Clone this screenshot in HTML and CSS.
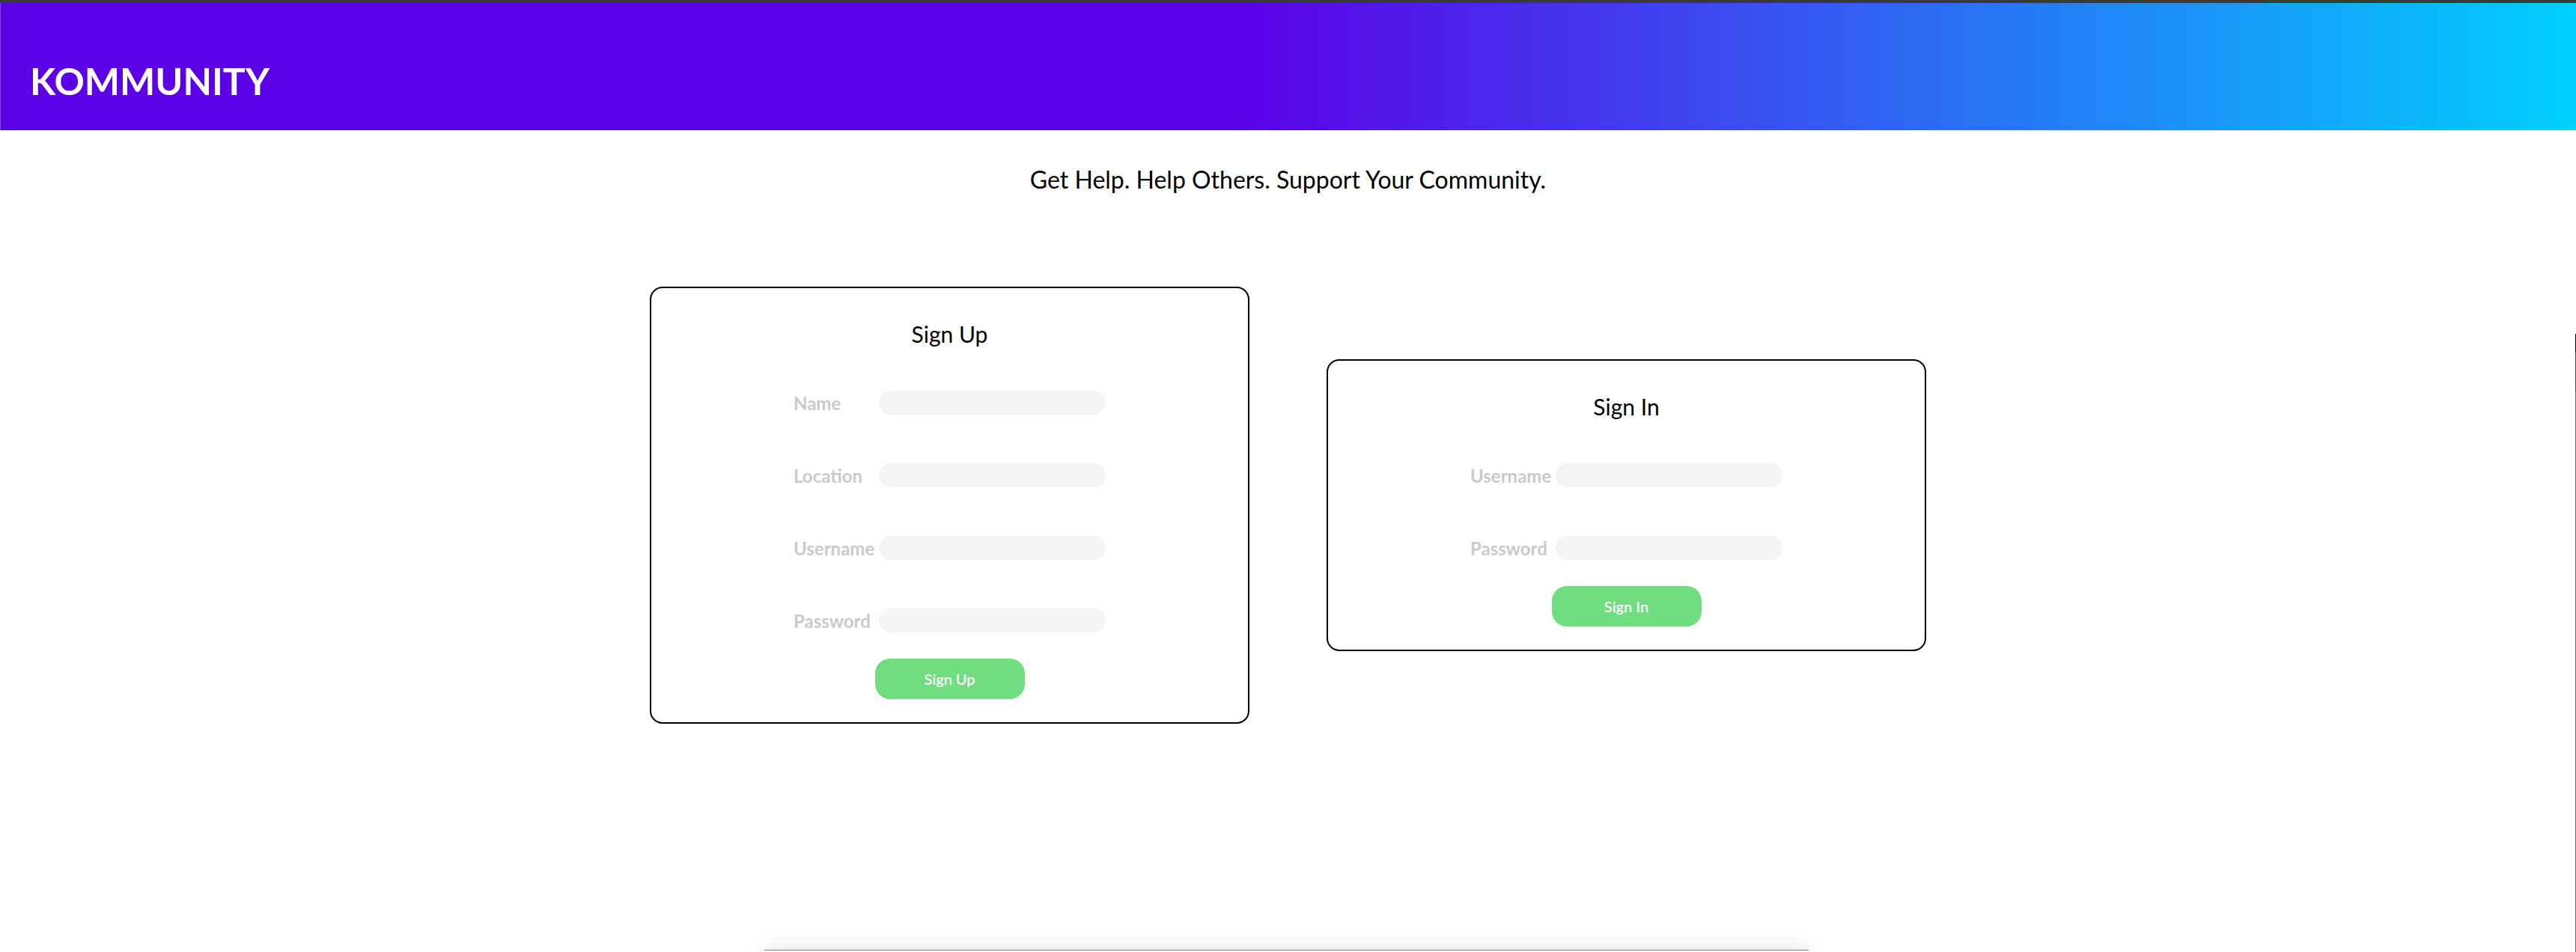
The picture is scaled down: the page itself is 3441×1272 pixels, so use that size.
FILE: index.html
```html
<!DOCTYPE html>
<html lang="en">
<head>
<meta charset="utf-8">
<title>Kommunity</title>
<link rel="stylesheet" href="styles.css">
</head>
<body>
<div class="topstrip"></div>
<header class="header">
  <h1 class="brand">KOMMUNITY</h1>
</header>
<p class="tagline">Get Help. Help Others. Support Your Community.</p>
<main class="cards">
  <section class="card">
    <h2 class="card-title">Sign Up</h2>
    <div class="fields">
      <div class="field"><label class="field-label">Name</label><input class="field-input" type="text"></div>
      <div class="field"><label class="field-label">Location</label><input class="field-input" type="text"></div>
      <div class="field"><label class="field-label">Username</label><input class="field-input" type="text"></div>
      <div class="field"><label class="field-label">Password</label><input class="field-input" type="password"></div>
    </div>
    <button class="btn">Sign Up</button>
  </section>
  <section class="card">
    <h2 class="card-title">Sign In</h2>
    <div class="fields">
      <div class="field"><label class="field-label">Username</label><input class="field-input" type="text"></div>
      <div class="field"><label class="field-label">Password</label><input class="field-input" type="password"></div>
    </div>
    <button class="btn">Sign In</button>
  </section>
</main>
<div class="bottom-peek"></div>
<div class="edge-line"></div>
</body>
</html>
```
FILE: styles.css
```css
html, body {
  margin: 0;
  padding: 0;
  background: #ffffff;
}
body {
  font-family: "Lato", "Open Sans", "Liberation Sans", sans-serif;
  color: #000;
  overflow: hidden;
  height: 1272px;
}
.topstrip {
  height: 4px;
  background: #3a3a3a;
}
.header {
  box-sizing: border-box;
  height: 170px;
  padding: 74px 0 0 39px;
  background: linear-gradient(90deg, #5c00e6 0%, #5c00e6 48%, #00cfff 100%);
  border-left: 1px solid #7d55d8;
}
.brand {
  margin: 0;
  font-size: 50px;
  font-weight: 700;
  line-height: normal;
  color: #fff;
}
.tagline {
  margin: 46px 0 0;
  text-align: center;
  font-size: 32px;
  line-height: normal;
}
.cards {
  display: flex;
  justify-content: center;
  align-items: center;
  gap: 103px;
  margin-top: 124px;
}
.card {
  box-sizing: border-box;
  width: 801px;
  border: 2px solid #000;
  border-radius: 17px;
  padding: 43px 0 31px;
  display: flex;
  flex-direction: column;
  align-items: center;
}
.card-title {
  margin: 0 0 58px;
  font-size: 30px;
  font-weight: 400;
  line-height: normal;
}
.fields {
  display: flex;
  flex-direction: column;
  gap: 65px;
}
.field {
  display: flex;
  align-items: center;
  height: 32px;
}
.field-label {
  width: 114px;
  white-space: nowrap;
  font-size: 24px;
  font-weight: 700;
  color: #cdc9c9;
}
.field-input {
  box-sizing: border-box;
  width: 303px;
  height: 32px;
  border: none;
  border-radius: 16px;
  background: #f4f4f4;
  outline: none;
  padding: 0 14px;
  font-family: inherit;
}
.btn {
  margin-top: 35px;
  width: 200px;
  height: 54px;
  border: none;
  border-radius: 20px;
  background: #70dd80;
  color: #fff;
  font-family: inherit;
  font-size: 20px;
  font-weight: 600;
}
.bottom-peek {
  position: fixed;
  left: 1021px;
  width: 1395px;
  bottom: -40px;
  height: 42px;
  background: #fff;
  border-top: 1px solid #7a7a7a;
  box-shadow: 0 0 30px rgba(0, 0, 0, 0.13);
}
.edge-line {
  position: fixed;
  right: 0;
  top: 446px;
  bottom: 0;
  width: 1px;
  background: linear-gradient(180deg, #000 0, #000 25px, #4a4a4a 25px, #4a4a4a 77px, #6a6a6a 77px);
}
```
